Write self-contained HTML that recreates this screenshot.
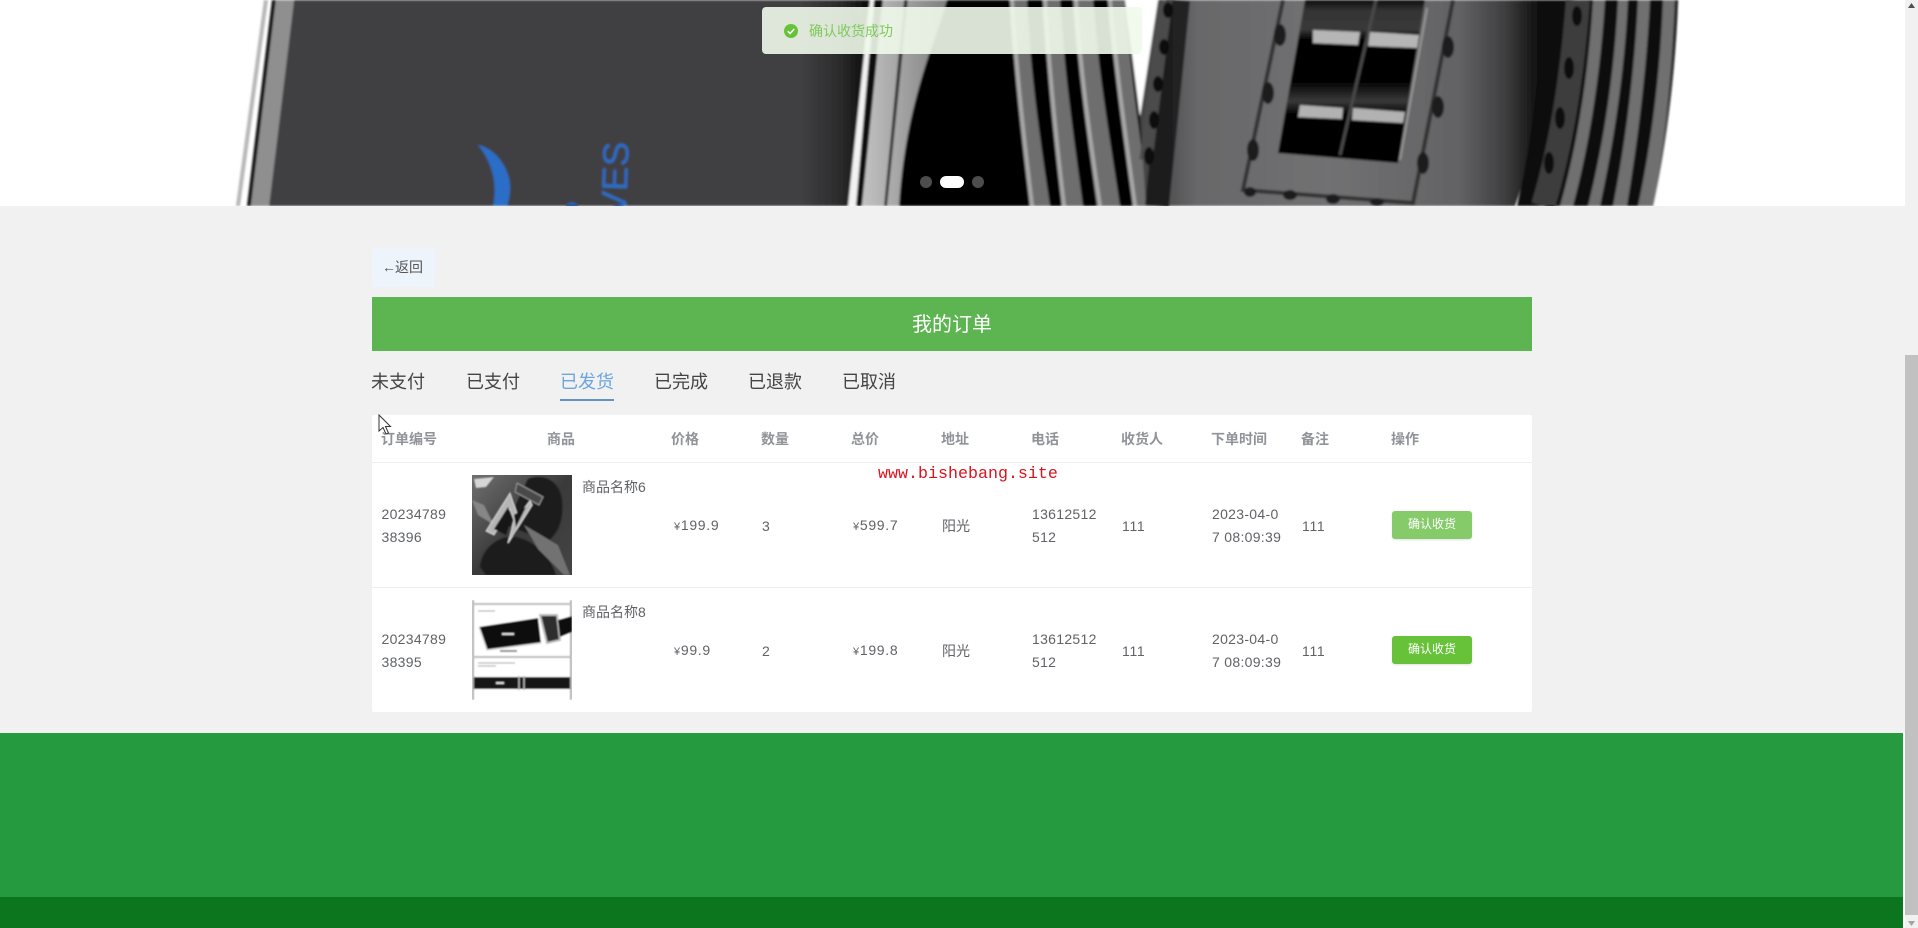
<!DOCTYPE html>
<html lang="zh-CN">
<head>
<meta charset="utf-8">
<title>我的订单</title>
<style>
html,body{margin:0;padding:0;width:1918px;height:928px;overflow:hidden;background:#fff;}
body{position:relative;font-family:"Liberation Sans","Noto Sans CJK SC",sans-serif;font-size:14px;color:#606266;}
.a{position:absolute;white-space:nowrap;line-height:20px;height:20px;}
.b{position:absolute;}
.th{font-weight:700;color:#909399;}
.n{letter-spacing:.3px;}
.p{letter-spacing:.7px;}
.tab{font-size:18px;line-height:26px;height:26px;top:369px;}
.btn{position:absolute;left:1392px;width:80px;height:28px;border-radius:3px;color:#fff;font-size:12px;line-height:27px;text-align:center;box-shadow:0 1px 2px rgba(0,0,0,.12);}
</style>
</head>
<body>
<div class="b" style="left:0;top:206px;width:1905px;height:722px;background:#f1f1f1;"></div>

<!-- banner -->
<svg class="b" style="left:0;top:0;" width="1905" height="206" viewBox="0 0 1905 206">
<defs>
<filter id="bl" x="-5%" y="-5%" width="110%" height="110%"><feGaussianBlur stdDeviation="1.1"/></filter>
<linearGradient id="pr" gradientUnits="userSpaceOnUse" x1="269" x2="872" y1="0" y2="0"><stop offset="0" stop-color="#414042"/><stop offset=".88" stop-color="#414042"/><stop offset=".95" stop-color="#2a2a2a"/><stop offset="1" stop-color="#060606"/></linearGradient>
<linearGradient id="gb" gradientUnits="userSpaceOnUse" x1="860" x2="950" y1="0" y2="0"><stop offset="0" stop-color="#c4c4c4"/><stop offset=".5" stop-color="#a0a0a0"/><stop offset="1" stop-color="#7c7c7c"/></linearGradient>
<linearGradient id="bd" gradientUnits="userSpaceOnUse" x1="1150" x2="1545" y1="0" y2="0"><stop offset="0" stop-color="#444"/><stop offset=".12" stop-color="#68686a"/><stop offset=".45" stop-color="#717173"/><stop offset=".78" stop-color="#636365"/><stop offset=".9" stop-color="#3e3e3f"/><stop offset="1" stop-color="#060606"/></linearGradient>
<linearGradient id="w1" x1="0" x2="0" y1="0" y2="1"><stop offset="0" stop-color="#0a0a0a"/><stop offset=".06" stop-color="#333"/><stop offset=".18" stop-color="#3a3a3a"/><stop offset=".24" stop-color="#050505"/><stop offset=".5" stop-color="#020202"/><stop offset=".62" stop-color="#3a3a3a"/><stop offset=".7" stop-color="#030303"/><stop offset="1" stop-color="#000"/></linearGradient>
</defs>
<g filter="url(#bl)">
<polygon points="264,0 268,0 240,206 236,206" fill="#b5b5b5"/>
<polygon points="272,0 276,0 251,206 247,206" fill="#111"/>
<polygon points="276,0 294,0 269,206 251,206" fill="#8f8f8f"/>
<polygon points="294,0 872,0 850,206 269,206" fill="url(#pr)"/>
<path d="M478,145 C492,148 504,160 509,178 C511,188 510,198 507,206 L493,206 C497,190 495,165 478,145Z" fill="#2a6ec8"/>
<circle cx="572" cy="208" r="6" fill="#2a5ea8"/>
<text transform="translate(626,216) rotate(-88)" font-family="Liberation Sans" font-size="36" fill="#2a6ec8" textLength="74" lengthAdjust="spacingAndGlyphs">VES</text>

<!-- left belt stripes -->
<polygon points="870,0 874,0 856,206 848,206" fill="#f2f2f2"/>
<polygon points="874,0 883,0 862,206 856,206" fill="#0e0e0e"/>
<polygon points="883,0 904,0 884,206 862,206" fill="url(#gb)"/>
<polygon points="904,0 908,0 888,206 884,206" fill="#333"/>
<path d="M908,0 L948,0 C930,55 905,110 900,206 L887,206Z" fill="url(#gb)"/>
<path d="M947,0 L1170,0 L1160,206 L899,206 C905,110 930,55 947,0Z" fill="#040404"/>
<g fill="#6e6e6e">
<path d="M1010,0 L1027,0 C1030,70 1040,140 1050,206 L1030,206 C1022,140 1014,70 1010,0Z"/>
<path d="M1043,0 L1060,0 C1064,70 1074,140 1083,206 L1062,206 C1054,140 1047,70 1043,0Z"/>
<path d="M1073,0 L1093,0 C1098,70 1110,140 1120,206 L1097,206 C1088,140 1078,70 1073,0Z"/>
<path d="M1108,0 L1125,0 C1130,70 1140,140 1150,206 L1133,206 C1124,140 1114,70 1108,0Z"/>
</g>
<path d="M1012,0 C1016,70 1024,140 1032,206 M1045,0 C1049,70 1056,140 1064,206 M1076,0 C1080,70 1090,140 1100,206 M1110,0 C1116,70 1126,140 1135,206" stroke="#a8a8a8" stroke-width="4" fill="none"/>

<!-- white notch -->
<polygon points="1125,0 1160,0 1140,117" fill="#fff"/>

<!-- buckle body -->
<path d="M1158,0 L1560,0 C1550,80 1535,150 1515,206 L1146,206 L1140,117Z" fill="url(#bd)"/>
<!-- left chain stitching -->
<path d="M1178,0 L1157,206" stroke="#161616" stroke-width="24" opacity=".85" fill="none"/>
<path d="M1166,0 L1146,160" stroke="#4c4c4c" stroke-width="13" fill="none"/>
<g fill="#101010">
<ellipse cx="1168" cy="10" rx="5" ry="8"/><ellipse cx="1164" cy="47" rx="5" ry="8"/>
<ellipse cx="1158" cy="84" rx="5" ry="8"/><ellipse cx="1154" cy="120" rx="5" ry="9"/><ellipse cx="1149" cy="156" rx="5" ry="9"/>
</g>

<!-- stitched rectangle -->
<path d="M1283,0 L1243,190 L1413,203 L1453,0" stroke="#303030" stroke-width="4" fill="none"/>
<g fill="#1c1c1c">
<ellipse cx="1280" cy="35" rx="6" ry="11"/><ellipse cx="1268" cy="93" rx="6" ry="11"/><ellipse cx="1253" cy="150" rx="6" ry="11"/>
<ellipse cx="1448" cy="47" rx="6" ry="11"/><ellipse cx="1438" cy="107" rx="6" ry="11"/><ellipse cx="1423" cy="163" rx="6" ry="11"/>
<ellipse cx="1250" cy="192" rx="6" ry="5"/><ellipse cx="1290" cy="195" rx="7" ry="5"/><ellipse cx="1333" cy="199" rx="7" ry="5"/><ellipse cx="1377" cy="202" rx="7" ry="4"/>
</g>

<!-- window -->
<polygon points="1305,0 1425,0 1398,163 1278,153" fill="url(#w1)"/>
<path d="M1427,8 L1400,160" stroke="#a5a5a5" stroke-width="1.5" fill="none"/>
<path d="M1376,0 L1362,60 L1340,155" stroke="#4a4a4a" stroke-width="3" fill="none"/>
<polygon points="1313,30 1360,32 1358,45 1313,43" fill="#b6b6b6"/>
<polygon points="1370,32 1419,35 1417,48 1368,46" fill="#b6b6b6"/>
<polygon points="1300,105 1343,108 1342,119 1298,117" fill="#b2b2b2"/>
<polygon points="1353,108 1405,112 1403,123 1352,120" fill="#b2b2b2"/>

<!-- right side -->
<path d="M1543,0 L1678,0 C1675,80 1665,150 1653,206 L1517,206 C1530,150 1540,80 1543,0Z" fill="#070707"/>
<path d="M1578,0 C1572,80 1560,150 1543,206" stroke="#3c3c3c" stroke-width="24" fill="none"/>
<g fill="#0a0a0a">
<ellipse cx="1577" cy="16" rx="5" ry="10"/><ellipse cx="1569" cy="68" rx="5" ry="11"/><ellipse cx="1560" cy="118" rx="5" ry="11"/><ellipse cx="1549" cy="163" rx="5" ry="11"/>
</g>
<g fill="#6f6f6f">
<path d="M1593,0 L1605,0 C1600,80 1588,150 1573,206 L1560,206 C1576,150 1588,80 1593,0Z"/>
<path d="M1618,0 L1628,0 C1624,80 1612,150 1600,206 L1588,206 C1602,150 1614,80 1618,0Z"/>
<path d="M1638,0 L1650,0 C1646,80 1636,150 1627,206 L1613,206 C1624,150 1634,80 1638,0Z"/>
<path d="M1663,0 L1675,0 C1672,80 1664,150 1653,206 L1638,206 C1650,150 1660,80 1663,0Z"/>
</g>
</g>
</svg>

<!-- carousel dots -->
<div class="b" style="left:920px;top:176px;width:12px;height:12px;border-radius:6px;background:rgba(255,255,255,.3);"></div>
<div class="b" style="left:940px;top:176px;width:24px;height:12px;border-radius:6px;background:#fff;"></div>
<div class="b" style="left:972px;top:176px;width:12px;height:12px;border-radius:6px;background:rgba(255,255,255,.3);"></div>

<!-- toast -->
<div class="b" style="left:762px;top:7px;width:380px;height:47px;border-radius:4px;background:rgba(240,249,235,.9);"></div>
<svg class="b" style="left:784px;top:24px;" width="14" height="14" viewBox="0 0 14 14"><circle cx="7" cy="7" r="7" fill="#67c23a"/><path d="M3.8 7.2 L6.1 9.5 L10.3 4.9" stroke="#fff" stroke-width="1.5" fill="none"/></svg>
<div class="a" style="left:809px;top:21px;color:#7fca5a;">确认收货成功</div>

<!-- back -->
<div class="b" style="left:372px;top:248px;width:63px;height:39px;background:#ecf5ff;opacity:.8;border-radius:3px;"></div>
<div class="a" style="left:382px;top:257px;color:#555;"><span style="letter-spacing:-1px">←</span>返回</div>

<!-- title -->
<div class="b" style="left:372px;top:297px;width:1160px;height:54px;background:#5cb550;color:#fff;font-size:20px;line-height:57px;text-align:center;">我的订单</div>

<!-- tabs -->
<div class="a tab" style="left:371px;color:#444;">未支付</div>
<div class="a tab" style="left:466px;color:#444;">已支付</div>
<div class="a tab" style="left:560px;color:#6aa6e0;">已发货</div>
<div class="a tab" style="left:654px;color:#444;">已完成</div>
<div class="a tab" style="left:748px;color:#444;">已退款</div>
<div class="a tab" style="left:842px;color:#444;">已取消</div>
<div class="b" style="left:560px;top:399px;width:54px;height:2px;background:#5f93c0;"></div>

<!-- table -->
<div class="b" style="left:372px;top:415px;width:1160px;height:297px;background:#fff;border-radius:2px;"></div>
<div class="b" style="left:372px;top:462px;width:1160px;height:1px;background:#ebeef5;"></div>
<div class="b" style="left:372px;top:587px;width:1160px;height:1px;background:#ebeef5;"></div>

<div class="a th" style="left:381px;top:429px;">订单编号</div>
<div class="a th" style="left:547px;top:429px;">商品</div>
<div class="a th" style="left:671px;top:429px;">价格</div>
<div class="a th" style="left:761px;top:429px;">数量</div>
<div class="a th" style="left:851px;top:429px;">总价</div>
<div class="a th" style="left:941px;top:429px;">地址</div>
<div class="a th" style="left:1031px;top:429px;">电话</div>
<div class="a th" style="left:1121px;top:429px;">收货人</div>
<div class="a th" style="left:1211px;top:429px;">下单时间</div>
<div class="a th" style="left:1301px;top:429px;">备注</div>
<div class="a th" style="left:1391px;top:429px;">操作</div>

<!-- row 1 -->
<div class="a n" style="left:381.5px;top:504px;">20234789</div>
<div class="a n" style="left:381.5px;top:527px;">38396</div>
<svg class="b" style="left:472px;top:475px;" width="100" height="100" viewBox="0 0 100 100">
<defs>
<linearGradient id="p1" x1="0" y1="0" x2="1" y2="1"><stop offset="0" stop-color="#707070"/><stop offset=".5" stop-color="#3a3a3a"/><stop offset="1" stop-color="#444"/></linearGradient>
<filter id="bl2" x="-5%" y="-5%" width="110%" height="110%"><feGaussianBlur stdDeviation=".7"/></filter>
</defs>
<rect width="100" height="100" fill="url(#p1)"/>
<g filter="url(#bl2)">
<path d="M56 4 C72 -2 88 6 90 26 C92 48 84 60 76 66 L34 50 Z" fill="#1d1d1d"/>
<path d="M8 92 C10 72 28 60 44 62 C60 66 76 76 84 100 L14 100Z" fill="#1f1f1f"/>
<polygon points="52,50 86,70 98,100 92,100 66,74" fill="#727272"/>
<polygon points="0,25 12,30 22,50 6,40" fill="#868686"/>
<polygon points="45,8 71,22 67,30 43,17" fill="#484848" stroke="#999" stroke-width="1"/>
<path d="M38 18 L14 56 L22 60 L38 34 L42 45 L36 68 L60 30 L58 26 L46 42 Z" fill="#b5b5b5" stroke="#dcdcdc" stroke-width="1"/>
<path d="M36 32 L22 54 L34 60 L40 42Z M54 32 L44 52 L42 40Z" fill="#131313"/>
<path d="M2 4 L22 2 L14 12 L4 13Z" fill="#d6d6d6"/>
</g>
</svg>
<div class="a" style="left:582px;top:477px;">商品名称6</div>
<div class="a p" style="left:674px;top:515px;"><span style="font-size:11px">¥</span>199.9</div>
<div class="a" style="left:762px;top:516px;">3</div>
<div class="a p" style="left:853px;top:515px;"><span style="font-size:11px">¥</span>599.7</div>
<div class="a" style="left:942px;top:516px;">阳光</div>
<div class="a n" style="left:1032px;top:504px;">13612512</div>
<div class="a n" style="left:1032px;top:527px;">512</div>
<div class="a p" style="left:1122px;top:516px;">111</div>
<div class="a n" style="left:1212px;top:504px;">2023-04-0</div>
<div class="a n" style="left:1212px;top:527px;">7 08:09:39</div>
<div class="a p" style="left:1302px;top:516px;">111</div>
<div class="btn" style="top:511px;background:#85cb6a;">确认收货</div>

<!-- row 2 -->
<div class="a n" style="left:381.5px;top:629px;">20234789</div>
<div class="a n" style="left:381.5px;top:652px;">38395</div>
<svg class="b" style="left:472px;top:600px;" width="100" height="100" viewBox="0 0 100 100">
<g filter="url(#bl2)">
<rect width="100" height="100" fill="#fff"/>
<path d="M1 0V100M99 0V100" stroke="#aaa" stroke-width="2"/>
<path d="M0 4H100M0 57H100" stroke="#bbb" stroke-width="2"/>
<path d="M6 11H23M6 63H43M6 66H24" stroke="#999" stroke-width="1"/>
<polygon points="7,27 66,18 69,43 15,50" fill="#111"/>
<path d="M7 27 L15 50 L69 43" stroke="#d8d8d8" stroke-width="1.5" fill="none"/>
<polygon points="68,15 85,15 88,40 75,43" fill="#2e2e2e" stroke="#bbb" stroke-width="2"/>
<polygon points="86,20 100,16 100,32 88,37" fill="#111"/>
<rect x="2" y="77" width="96" height="12" fill="#141414"/>
<path d="M47 76V90M52 76V90" stroke="#bbb" stroke-width="1.5"/>
<path d="M24 83H32M30 34H42" stroke="#ddd" stroke-width="2"/>
<path d="M28 51H45" stroke="#888" stroke-width="2"/>
</g>
</svg>
<div class="a" style="left:582px;top:602px;">商品名称8</div>
<div class="a p" style="left:674px;top:640px;"><span style="font-size:11px">¥</span>99.9</div>
<div class="a" style="left:762px;top:641px;">2</div>
<div class="a p" style="left:853px;top:640px;"><span style="font-size:11px">¥</span>199.8</div>
<div class="a" style="left:942px;top:641px;">阳光</div>
<div class="a n" style="left:1032px;top:629px;">13612512</div>
<div class="a n" style="left:1032px;top:652px;">512</div>
<div class="a p" style="left:1122px;top:641px;">111</div>
<div class="a n" style="left:1212px;top:629px;">2023-04-0</div>
<div class="a n" style="left:1212px;top:652px;">7 08:09:39</div>
<div class="a p" style="left:1302px;top:641px;">111</div>
<div class="btn" style="top:636px;background:#67c23a;">确认收货</div>

<!-- watermark -->
<div class="a" style="left:878px;top:465px;font-family:'Liberation Mono',monospace;font-size:16.67px;color:#d9141e;">www.bishebang.site</div>

<!-- cursor -->
<svg class="b" style="left:378px;top:414px;" width="14" height="22" viewBox="0 0 14 22"><path d="M1 1 L1 17 L5 13.5 L8 20 L10.5 19 L7.5 12.5 L12.5 12.5 Z" fill="#fff" stroke="#333" stroke-width="1"/></svg>

<!-- footer -->
<div class="b" style="left:0;top:733px;width:1903px;height:164px;background:#259a3f;"></div>
<div class="b" style="left:0;top:897px;width:1903px;height:31px;background:#0b761e;"></div>
<div class="b" style="left:1903px;top:733px;width:2px;height:195px;background:#fff;"></div>

<!-- scrollbar -->
<div class="b" style="left:1905px;top:0;width:13px;height:928px;background:#f1f1f1;"></div>
<div class="b" style="left:1905px;top:355px;width:13px;height:560px;background:#c1c1c1;"></div>
<svg class="b" style="left:1905px;top:0;" width="13" height="928" viewBox="0 0 13 928"><path d="M6.5 3 L10 8 L3 8Z" fill="#505050"/><path d="M3 921 L10 921 L6.5 926Z" fill="#a3a3a3"/></svg>
</body>
</html>
